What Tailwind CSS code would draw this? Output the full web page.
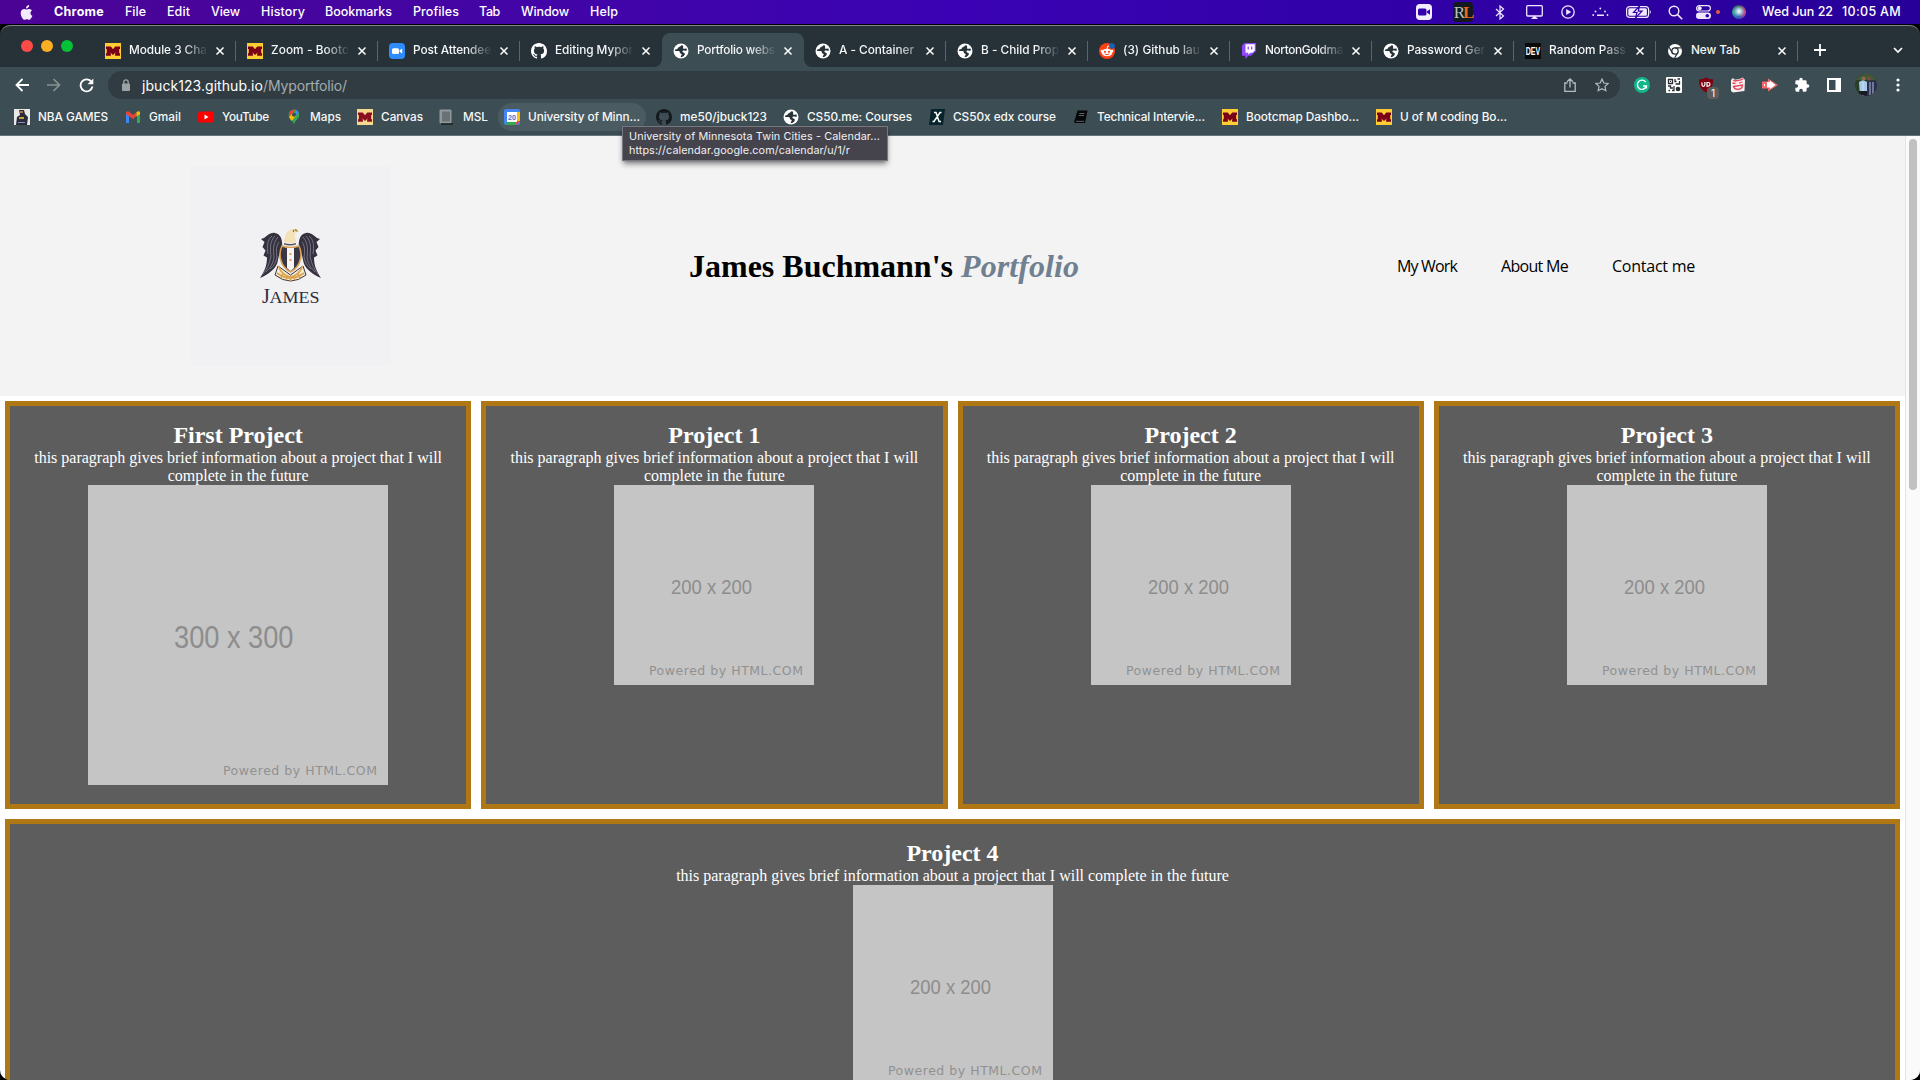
<!DOCTYPE html>
<html lang="en">
<head>
<meta charset="utf-8">
<title>Portfolio website</title>
<script src="https://cdn.jsdelivr.net/npm/@tailwindcss/browser@4"></script>
</head>
<body class="w-[1920px] h-[1080px] overflow-hidden bg-black font-['Inter',sans-serif]">
<svg class="hidden">
  <symbol id="m" viewBox="0 0 16 16"><rect width="16" height="16" fill="#fc3"/><path d="M1 3.500h4.800L8 6.300 10.200 3.500H15V6h-.8v4.200h.8v2.600h-4.900v-2.600h.5v-.8L8 12 5.400 9.400v.8h.5v2.600H1v-2.600h.8V6H1z" fill="#7a0019"/></symbol>
  <symbol id="m2" viewBox="0 0 16 16"><rect width="16" height="16" fill="#f5d98e"/><path d="M1 3.500h4.800L8 6.300 10.200 3.500H15V6h-.8v4.200h.8v2.600h-4.900v-2.600h.5v-.8L8 12 5.400 9.400v.8h.5v2.600H1v-2.600h.8V6H1z" fill="#8a1020"/></symbol>
  <symbol id="zoom" viewBox="0 0 16 16"><rect width="16" height="16" rx="4" fill="#2d8cff"/><rect x="3" y="5.200" width="7" height="5.800" rx="1.500" fill="#fff"/><path d="M10.600 7.300l2.600-1.900v5.200l-2.600-1.900z" fill="#fff"/></symbol>
  <symbol id="gh" viewBox="0 0 16 16"><path fill="currentColor" d="M8 0C3.580 0 0 3.580 0 8c0 3.540 2.290 6.530 5.470 7.590.4.070.55-.17.55-.38 0-.19-.01-.82-.01-1.490-2.010.37-2.530-.49-2.690-.94-.09-.23-.48-.94-.82-1.130-.28-.15-.68-.52-.01-.53.63-.01 1.080.58 1.230.82.72 1.210 1.870.87 2.330.66.07-.52.28-.87.51-1.070-1.780-.2-3.640-.89-3.640-3.950 0-.87.31-1.590.82-2.150-.08-.2-.36-1.020.08-2.120 0 0 .67-.21 2.200.82.64-.18 1.320-.27 2-.27s1.360.09 2 .27c1.530-1.040 2.200-.82 2.200-.82.44 1.100.16 1.920.08 2.120.51.56.82 1.270.82 2.150 0 3.070-1.870 3.750-3.650 3.950.29.25.54.73.54 1.480 0 1.070-.01 1.930-.01 2.200 0 .21.15.46.55.38A8.010 8.010 0 0016 8c0-4.420-3.580-8-8-8z"/></symbol>
  <symbol id="globe" viewBox="0 0 16 16"><circle cx="8" cy="8" r="7.500" fill="#fff"/><path d="M9.500 2.200C7 2.400 7.600 4 6 4.200c-1.600.2-.8 1.800-2.400 2-.8.100-1.400.2-1.800 1C3 8.600 5 7.600 6.200 8.200c1.200.6.2 1.800 1.400 2.200 1 .3 1.600 1 .6 2.200-.4.500-.6 1-.4 1.600 3-.2 4.200-2 4-3.600-.1-1.200-1.600-.8-2.200-1.600-.6-1 .4-1.600 1.400-1.400 1 .2 1.800.4 3-.4-.2-.8-.4-1.400-.8-2-1.200.8-2.400.8-3 .2-.6-.8.800-1.200-.7-3.200z" fill="#263238"/></symbol>
  <symbol id="x" viewBox="0 0 10 10"><path d="M1.500 1.500l7 7M8.500 1.500l-7 7" stroke="#fff" stroke-width="1.500" fill="none"/></symbol>
</svg>

<!-- macOS menu bar -->
<header class="flex h-6 items-center bg-linear-to-r from-[#4b0395] via-[#3a02b4] to-[#270099] text-[12.500px] font-medium text-white whitespace-nowrap">
  <svg class="ml-[19px] mr-5 size-[15px] shrink-0 text-[#f3eaff]" viewBox="0 0 16 18"><path fill="currentColor" d="M11.200 0c.1 1.200-.4 2.300-1.100 3.100-.7.800-1.700 1.300-2.700 1.200C7.300 3.200 7.800 2.100 8.500 1.300 9.200.6 10.300 0 11.200 0zM14.700 6.200c-1.200.8-1.900 1.900-1.900 3.300 0 1.600.9 2.900 2.300 3.500-.5 1.300-1.700 3.400-2.700 4.300-.9.700-1.700.5-2.600.1-1-.4-1.800-.4-2.800 0-1.200.5-1.900.6-2.900-.4C2 14.900.3 10.700 1.300 7.700 1.900 5.800 3.400 4.700 5 4.700c1.200 0 2.200.8 3 .8s2-.9 3.500-.8c1.200.1 2.400.6 3.200 1.500z"/></svg>
  <span class="w-[71px] font-bold"><span data-w="50">Chrome</span></span>
  <span class="w-[42px]"><span data-w="21">File</span></span>
  <span class="w-11"><span data-w="23">Edit</span></span>
  <span class="w-[50px]"><span data-w="29">View</span></span>
  <span class="w-16"><span data-w="44">History</span></span>
  <span class="w-[88px]"><span data-w="67">Bookmarks</span></span>
  <span class="w-[66px]"><span data-w="46">Profiles</span></span>
  <span class="w-[42px]"><span data-w="21">Tab</span></span>
  <span class="w-[69px]"><span data-w="48">Window</span></span>
  <span><span data-w="28">Help</span></span>
  <div class="ml-auto flex items-center pr-[19px]">
    <svg class="mr-[21px] size-4" viewBox="0 0 16 16"><rect width="16" height="16" rx="4" fill="#f3eeff"/><rect x="2" y="4.500" width="8.500" height="7" rx="1.500" fill="#3400ae"/><path d="M11 7.200l3-2v5.600l-3-2z" fill="#3400ae"/></svg>
    <div class="mr-[22px] flex h-5 w-5 items-center justify-center rounded bg-[#12191f] font-['Liberation_Serif',serif] text-[17px] leading-none tracking-[-2px] text-[#b9c4c4]">R<span class="font-bold text-[#f0641e]">L</span></div>
    <svg class="mr-[21px] h-[15px] w-[10px]" viewBox="0 0 10 15"><path d="M1 4l7.500 7L5 14V1l3.500 3L1 11" fill="none" stroke="#efe8ff" stroke-width="1.200"/></svg>
    <svg class="mr-[18px] h-[15px] w-[17px]" viewBox="0 0 17 15"><rect x=".7" y=".7" width="15.600" height="10.300" rx="1" fill="none" stroke="#efe8ff" stroke-width="1.300"/><path d="M5 14l3.500-3.500L12 14z" fill="#efe8ff"/></svg>
    <svg class="mr-[17px] size-[14px]" viewBox="0 0 14 14"><circle cx="7" cy="7" r="6.200" fill="none" stroke="#efe8ff" stroke-width="1.300"/><path d="M5.200 4l5 3-5 3z" fill="#efe8ff"/></svg>
    <svg class="mr-[17px] h-[10px] w-[17px]" viewBox="0 0 17 10" fill="#efe8ff"><circle cx="1.200" cy="8" r=".9"/><circle cx="3.500" cy="4.500" r=".9"/><circle cx="8.300" cy="1.500" r=".9"/><circle cx="13" cy="4.500" r=".9"/><circle cx="15.500" cy="8" r=".9"/><path d="M5 7.500h7V9H5z"/></svg>
    <svg class="mr-[16px] h-3 w-[26px]" viewBox="0 0 26 12"><rect x=".6" y=".6" width="22" height="10.800" rx="3" fill="none" stroke="#efe8ff" stroke-width="1.200"/><rect x="2.300" y="2.300" width="18.600" height="7.400" rx="1.500" fill="#efe8ff"/><path d="M23.800 4q2 2 0 4z" fill="#efe8ff"/><path d="M13.500 0L7.500 6.500h3.500L9.500 12l6.500-6.800h-3.700z" fill="#efe8ff" stroke="#3200a8" stroke-width="1.200"/></svg>
    <svg class="mr-[13px] size-[15px]" viewBox="0 0 15 15"><circle cx="6" cy="6" r="4.800" fill="none" stroke="#efe8ff" stroke-width="1.400"/><path d="M9.600 9.600l4.600 4.600" stroke="#efe8ff" stroke-width="1.600"/></svg>
    <svg class="mr-[5px] h-[14px] w-[15px]" viewBox="0 0 15 14"><rect x=".6" y=".6" width="13.800" height="5.400" rx="2.700" fill="none" stroke="#efe8ff" stroke-width="1.200"/><circle cx="3.700" cy="3.300" r="2" fill="#efe8ff"/><rect y="7.500" width="15" height="6.500" rx="3.200" fill="#efe8ff"/><circle cx="11.300" cy="10.800" r="1.800" fill="#3200a8"/></svg>
    <div class="mr-3 size-1 rounded-full bg-[#e0603c]"></div>
    <div class="mr-4 size-[14px] rounded-full bg-[radial-gradient(circle_at_50%_45%,#fff_0,#9fc8d8_25%,transparent_55%),conic-gradient(#37505c,#d04a84,#3355c0,#2ea890,#37505c)]"></div>
    <span class="w-20"><span data-w="71">Wed Jun 22</span></span>
    <span data-w="59">10:05 AM</span>
  </div>
</header>

<!-- browser window -->
<main class="mt-px h-[1055px] overflow-hidden rounded-[10px] border-t border-[#7d8588] bg-[#263238]">
  <div class="flex h-[41px] items-stretch text-[11.800px] font-medium text-[#f4f6f7] whitespace-nowrap">
    <div class="flex w-[94px] gap-2 pl-[21px] pt-[14px]">
      <i class="size-3 rounded-full bg-[#ff4b47]"></i><i class="size-3 rounded-full bg-[#fdaf24]"></i><i class="size-3 rounded-full bg-[#05c138]"></i>
    </div>
    <div class="flex w-[142px] items-center pl-[11px] pt-2"><svg class="mr-2 size-4"><use href="#m"/></svg><div class="w-[79px] overflow-hidden [mask-image:linear-gradient(to_right,#000_68%,transparent)]"><span data-w="78">Module 3 Cha</span></div><svg class="ml-[7px] size-[10px]"><use href="#x"/></svg><i class="ml-auto h-5 w-px bg-[#5b6468]"></i></div>
    <div class="flex w-[142px] items-center pl-[11px] pt-2"><svg class="mr-2 size-4"><use href="#m"/></svg><div class="w-[79px] overflow-hidden [mask-image:linear-gradient(to_right,#000_68%,transparent)]"><span data-w="78">Zoom - Bootc</span></div><svg class="ml-[7px] size-[10px]"><use href="#x"/></svg><i class="ml-auto h-5 w-px bg-[#5b6468]"></i></div>
    <div class="flex w-[142px] items-center pl-[11px] pt-2"><svg class="mr-2 size-4"><use href="#zoom"/></svg><div class="w-[79px] overflow-hidden [mask-image:linear-gradient(to_right,#000_68%,transparent)]"><span data-w="78">Post Attendee</span></div><svg class="ml-[7px] size-[10px]"><use href="#x"/></svg><i class="ml-auto h-5 w-px bg-[#5b6468]"></i></div>
    <div class="flex w-[142px] items-center pl-[11px] pt-2"><svg class="mr-2 size-4 text-white"><use href="#gh"/></svg><div class="w-[79px] overflow-hidden [mask-image:linear-gradient(to_right,#000_68%,transparent)]"><span data-w="78">Editing Mypor</span></div><svg class="ml-[7px] size-[10px]"><use href="#x"/></svg></div>
    <div class="flex w-[142px] items-end"><div class="relative flex h-[34px] w-full items-center rounded-t-lg bg-[#3c4d54] pl-[11px] pt-px">
      <svg class="absolute -left-2 bottom-0 size-2" viewBox="0 0 8 8"><path d="M8 0v8H0a8 8 0 008-8z" fill="#3c4d54"/></svg>
      <svg class="absolute -right-2 bottom-0 size-2" viewBox="0 0 8 8"><path d="M0 0v8h8a8 8 0 01-8-8z" fill="#3c4d54"/></svg>
      <svg class="mr-2 size-4"><use href="#globe"/></svg><div class="w-[79px] overflow-hidden [mask-image:linear-gradient(to_right,#000_68%,transparent)]"><span data-w="78">Portfolio webs</span></div><svg class="ml-[7px] size-[10px]"><use href="#x"/></svg></div></div>
    <div class="flex w-[142px] items-center pl-[11px] pt-2"><svg class="mr-2 size-4"><use href="#globe"/></svg><div class="w-[79px] overflow-hidden [mask-image:linear-gradient(to_right,#000_72%,transparent_115%)]"><span data-w="75">A - Container</span></div><svg class="ml-[7px] size-[10px]"><use href="#x"/></svg><i class="ml-auto h-5 w-px bg-[#5b6468]"></i></div>
    <div class="flex w-[142px] items-center pl-[11px] pt-2"><svg class="mr-2 size-4"><use href="#globe"/></svg><div class="w-[79px] overflow-hidden [mask-image:linear-gradient(to_right,#000_68%,transparent)]"><span data-w="78">B - Child Prop</span></div><svg class="ml-[7px] size-[10px]"><use href="#x"/></svg><i class="ml-auto h-5 w-px bg-[#5b6468]"></i></div>
    <div class="flex w-[142px] items-center pl-[11px] pt-2"><svg class="mr-2 size-4" viewBox="0 0 16 16"><circle cx="8" cy="8" r="8" fill="#ff4012"/><ellipse cx="8" cy="9.500" rx="5.300" ry="3.800" fill="#fff"/><circle cx="2.900" cy="8" r="1.300" fill="#fff"/><circle cx="13.100" cy="8" r="1.300" fill="#fff"/><path d="M8 6l.8-3 2 .4" stroke="#fff" fill="none"/><circle cx="6" cy="8.800" r="1.100" fill="#ff4012"/><circle cx="10" cy="8.800" r="1.100" fill="#ff4012"/><path d="M5.800 11q2.200 1.600 4.400 0" stroke="#ff4012" fill="none"/><circle cx="13" cy="3" r="2.800" fill="#1463b5"/></svg><div class="w-[79px] overflow-hidden [mask-image:linear-gradient(to_right,#000_68%,transparent)]"><span data-w="77">(3) Github lau</span></div><svg class="ml-[7px] size-[10px]"><use href="#x"/></svg><i class="ml-auto h-5 w-px bg-[#5b6468]"></i></div>
    <div class="flex w-[142px] items-center pl-[11px] pt-2"><svg class="mr-2 size-4" viewBox="0 0 16 16"><path d="M3.500 0L1 2.800v10h3.300V16l3.200-3.200H10l5-4.800V0z" fill="#9146ff"/><path d="M4.500 1.200h9.300v6.400l-2.200 2.200H9.300l-2 2v-2H4.500z" fill="#fff"/><path d="M7.200 3.500v3M10.700 3.500v3" stroke="#9146ff" stroke-width="1.300"/></svg><div class="w-[79px] overflow-hidden [mask-image:linear-gradient(to_right,#000_68%,transparent)]"><span data-w="78">NortonGoldma</span></div><svg class="ml-[7px] size-[10px]"><use href="#x"/></svg><i class="ml-auto h-5 w-px bg-[#5b6468]"></i></div>
    <div class="flex w-[142px] items-center pl-[11px] pt-2"><svg class="mr-2 size-4"><use href="#globe"/></svg><div class="w-[79px] overflow-hidden [mask-image:linear-gradient(to_right,#000_68%,transparent)]"><span data-w="78">Password Ger</span></div><svg class="ml-[7px] size-[10px]"><use href="#x"/></svg><i class="ml-auto h-5 w-px bg-[#5b6468]"></i></div>
    <div class="flex w-[142px] items-center pl-[11px] pt-2"><svg class="mr-2 size-4" viewBox="0 0 16 16"><rect width="16" height="16" fill="#0a0a0a"/><text x=".8" y="12" textLength="14.400" lengthAdjust="spacingAndGlyphs" fill="#fff" font-family="Liberation Sans" font-weight="700" font-size="10.500">DEV</text></svg><div class="w-[79px] overflow-hidden [mask-image:linear-gradient(to_right,#000_68%,transparent)]"><span data-w="77">Random Pass</span></div><svg class="ml-[7px] size-[10px]"><use href="#x"/></svg><i class="ml-auto h-5 w-px bg-[#5b6468]"></i></div>
    <div class="flex w-[142px] items-center pl-[11px] pt-2"><svg class="mr-2 size-4" viewBox="0 0 16 16"><circle cx="8" cy="8" r="7" fill="#fff"/><circle cx="8" cy="8" r="3.200" fill="#fff" stroke="#263238" stroke-width="1.300"/><path d="M8 4.800h6.500M5.200 9.600L2 4M10.800 9.600L7.600 15" stroke="#263238" stroke-width="1.200"/></svg><div class="w-[79px]"><span data-w="49">New Tab</span></div><svg class="ml-[7px] size-[10px]"><use href="#x"/></svg><i class="ml-auto h-5 w-px bg-[#5b6468]"></i></div>
    <svg class="ml-[16px] mt-[18px] size-3" viewBox="0 0 12 12"><path d="M6 0v12M0 6h12" stroke="#fff" stroke-width="1.800"/></svg>
    <svg class="ml-[67px] mt-[21px] h-[7px] w-[10px]" viewBox="0 0 10 7"><path d="M1 1l4 4 4-4" fill="none" stroke="#fff" stroke-width="1.700"/></svg>
  </div>

  <!-- toolbar -->
  <div class="flex h-9 items-center bg-[#3c4d54]">
    <svg class="ml-[15px] size-[14px]" viewBox="0 0 14 14"><path d="M14 7H1.500M7.500 1L1.500 7l6 6" fill="none" stroke="#fff" stroke-width="1.800"/></svg>
    <svg class="ml-[18px] size-[14px]" viewBox="0 0 14 14"><path d="M0 7h12.500M6.500 1l6 6-6 6" fill="none" stroke="#87928f" stroke-width="1.700"/></svg>
    <svg class="ml-[18px] size-[15px]" viewBox="0 0 15 15"><path d="M12.600 4A6 6 0 1013.500 8.500" fill="none" stroke="#fff" stroke-width="1.800"/><path d="M14.300.5v5.800H8.500z" fill="#fff"/></svg>
    <div class="ml-[14px] flex h-7 w-[1512px] items-center rounded-full bg-[#303c42] pl-[14px] text-[14px] whitespace-nowrap">
      <svg class="mr-[12px] h-3 w-2" viewBox="0 0 8 12"><rect y="4.500" width="8" height="7.500" rx="1" fill="#9aa3a6"/><path d="M1.800 5V3a2.200 2.200 0 014.400 0v2" fill="none" stroke="#9aa3a6" stroke-width="1.300"/></svg>
      <span data-w="121" class="text-white">jbuck123.github.io</span><span data-w="84" class="text-[#a4acb0]">/Myportfolio/</span>
      <svg class="ml-auto h-[14px] w-3" viewBox="0 0 12 14"><path d="M3.500 5H.8v8.300h10.400V5H8.500M6 9.500V1M3 3.800L6 1l3 2.800" fill="none" stroke="#b5bcbf" stroke-width="1.300"/></svg>
      <svg class="ml-[19px] mr-[11px] size-[14px]" viewBox="0 0 14 14"><path d="M7 1l1.800 4 4.300.5L10 8.400l.8 4.300L7 10.600l-3.800 2.100L4 8.400.9 5.500 5.200 5z" fill="none" stroke="#b5bcbf" stroke-width="1.200"/></svg>
    </div>
    <svg class="ml-[14px] size-4" viewBox="0 0 16 16"><circle cx="8" cy="8" r="8" fill="#11b78a"/><path d="M11.800 5.200A4.600 4.600 0 1012.400 9H9M12.400 8.500v3" fill="none" stroke="#fff" stroke-width="1.400"/></svg>
    <svg class="ml-4 size-4" viewBox="0 0 16 16"><rect width="16" height="16" rx="1" fill="#fff"/><g fill="none" stroke="#2a2f32" stroke-width="1.300"><path d="M2.500 2.500h4v4h-4zM9 2v2.500h1.500M11.500 2H14M13.500 4v3H9.500M2 9h2.500v2H7M2.500 13.500H4M6 13.500h2V9"/></g><path d="M4 4h1v1H4z" fill="#2a2f32"/><circle cx="12" cy="12" r="2.300" fill="#2a2f32"/></svg>
    <div class="relative ml-4 size-4"><svg class="size-4" viewBox="0 0 16 16"><path d="M8 .5c2 1.300 4.500 1.800 7 1.800 0 6-1 10-7 13.200C2 12.300 1 8.300 1 2.300c2.500 0 5-.5 7-1.800z" fill="#800010"/><path d="M4 5.500v2.300q0 1.500 1.400 1.500T6.900 7.800V5M9 9.300V5.500h1.200q1.800 0 1.800 1.800t-1.800 1.900z" fill="none" stroke="#fff" stroke-width="1.200"/></svg><span class="absolute left-[9px] top-[10px] flex h-[12px] w-3 items-center justify-center rounded-sm bg-[#5d5d5d] text-[10px] leading-none text-white">1</span></div>
    <svg class="ml-4 size-4" viewBox="0 0 16 16"><path d="M1 3L3 1l2 1.800 5-1L13 .5 15 3l-.5 11L3 15.500 1 14z" fill="#f9eef0"/><path d="M3 3l2 1 6-1 2.500-1.500M2.500 6l3 .5M9 6l3.500-1M3.500 9.500l9-1.500q0 4-4.300 4.300Q4.500 12.500 3.500 9.500z" fill="none" stroke="#e4465a" stroke-width="1.300"/></svg>
    <svg class="ml-4 size-4" viewBox="0 0 16 16"><path d="M0 4.500h6V1.500L16 8 6 14.500v-3H0z" fill="#f6676c"/><path d="M5 5h3V3.500L13.500 8 8 12v-1.500H5z" fill="#fff"/><path d="M2 7h1v2H2z" fill="#fff"/></svg>
    <svg class="ml-4 size-4" viewBox="0 0 24 24"><path fill="#fff" d="M20.500 11H19V7a2 2 0 00-2-2h-4V3.500a2.500 2.500 0 00-5 0V5H4a2 2 0 00-2 2v3.800h1.500a2.700 2.700 0 010 5.400H2V20a2 2 0 002 2h3.800v-1.500a2.700 2.700 0 015.400 0V22H17a2 2 0 002-2v-4h1.500a2.500 2.500 0 000-5z"/></svg>
    <svg class="ml-[17px] size-[14px]" viewBox="0 0 14 14"><path d="M0 0h14v14H0zM2 2v10h6.500V2z" fill="#fff" fill-rule="evenodd"/></svg>
    <svg class="ml-[14px] size-[22px] rounded-full" viewBox="0 0 22 22"><rect width="22" height="22" fill="#2b3f28"/><path d="M0 0h22v6H0z" fill="#3f5b34"/><path d="M4 8l4-2 4 2v14H5z" fill="#a9cbea"/><path d="M12 8l5-2 5 3v13h-9z" fill="#2c2f55"/><circle cx="8.500" cy="4.500" r="2" fill="#8c6650"/><circle cx="14" cy="4.500" r="2" fill="#6f4f40"/><path d="M8 8v14M15 8v13M18 8v13" stroke="#d8e4f5" stroke-width=".8"/><path d="M4 17h8v5H4z" fill="#191b22"/></svg>
    <svg class="ml-[19px] h-[14px] w-1" viewBox="0 0 4 14" fill="#fff"><circle cx="2" cy="2" r="1.600"/><circle cx="2" cy="7" r="1.600"/><circle cx="2" cy="12" r="1.600"/></svg>
  </div>

  <!-- bookmarks bar -->
  <div class="flex h-[33px] items-start border-b border-[#667378] bg-[#3c4d54] pl-[14px] text-[11.800px] font-medium text-[#f7f8f8] whitespace-nowrap [&_span]:pt-0.5">
    <div class="flex h-7 w-[111px] items-center gap-2"><svg class="size-4" viewBox="0 0 16 16"><rect width="16" height="16" fill="#e8e8e8"/><path d="M5 1h5l1 4 3 3-1 8H2l1-8 3-2z" fill="#2b2b38"/><path d="M6 2h3v2H6z" fill="#a4744f"/><path d="M5 8h5v2H5z" fill="#c9a03c"/><path d="M4 13h7v1H4z" fill="#7c8fbf"/></svg><span data-w="70">NBA GAMES</span></div>
    <div class="flex h-7 w-[73px] items-center gap-2"><svg class="size-4" viewBox="0 0 16 16"><path d="M1 3.500V14h3V6z" fill="#4285f4"/><path d="M12 6v8h3V3.500z" fill="#34a853"/><path d="M1 3q2-1.500 3.500 0L8 6l3.500-3v4L8 10 1 5z" fill="#ea4335"/><path d="M11.500 3Q14 1.500 15 3v2l-3.500 2.500z" fill="#fbbc04"/></svg><span data-w="32">Gmail</span></div>
    <div class="flex h-7 w-[88px] items-center gap-2"><svg class="size-4" viewBox="0 0 16 16"><rect y="2.500" width="16" height="11" rx="2.500" fill="#f00"/><path d="M6.500 5.500v5l4-2.500z" fill="#fff"/></svg><span data-w="47">YouTube</span></div>
    <div class="flex h-7 w-[71px] items-center gap-2"><svg class="size-4" viewBox="0 0 16 16"><path d="M8 .5a5.300 5.300 0 015.300 5.300C13.300 10 9 11 8 15.500 7 11 2.700 10 2.700 5.800A5.300 5.300 0 018 .5z" fill="#34a853"/><path d="M4 2.400L8 .5l1.500.2L3 8q-.8-3 1-5.600z" fill="#ea4335"/><path d="M9.500.7A5.300 5.300 0 0112.700 3.500L8 8.500z" fill="#4285f4"/><path d="M3 8l4-4 3 3-4.500 5z" fill="#fbbc04"/><circle cx="8" cy="5.800" r="2" fill="#3c4d54"/></svg><span data-w="31">Maps</span></div>
    <div class="flex h-7 w-[81px] items-center gap-2"><svg class="size-4"><use href="#m2"/></svg><span data-w="42">Canvas</span></div>
    <div class="flex h-7 w-[60px] items-center gap-[9px]"><svg class="size-4" viewBox="0 0 16 16"><rect x="1.500" y=".5" width="12" height="14" rx="1" fill="#90989b"/><path d="M4 2.500h8v10H4z" fill="#6b7275"/><path d="M3 15h12" stroke="#1a1f21" stroke-width="1.500"/></svg><span data-w="25">MSL</span></div>
    <div class="flex h-7 w-[148px] items-center gap-2 rounded-full bg-[#4b5b62] pl-[6px]"><svg class="size-4" viewBox="0 0 16 16"><rect width="16" height="16" rx="2" fill="#4285f4"/><path d="M12 3h4v9h-4z" fill="#fbbc04"/><path d="M3 12h9v4H2z" fill="#34a853"/><path d="M12 12h4l-4 4z" fill="#ea4335"/><rect x="3" y="3" width="10" height="10" fill="#fff"/><text x="4" y="11" font-size="7.500" font-weight="700" textLength="8" lengthAdjust="spacingAndGlyphs" font-family="Liberation Sans" fill="#3a74d8">20</text></svg><span data-w="112">University of Minn...</span></div>
    <div class="ml-[10px] flex h-7 w-[127px] items-center gap-2"><svg class="size-4 text-[#14191c]"><use href="#gh"/></svg><span data-w="87">me50/jbuck123</span></div>
    <div class="flex h-7 w-[146px] items-center gap-2"><svg class="size-4"><use href="#globe"/></svg><span data-w="105">CS50.me: Courses</span></div>
    <div class="flex h-7 w-36 items-center gap-2"><svg class="size-4" viewBox="0 0 16 16"><path d="M2 0h14l-2 16H0z" fill="#06242b"/><path d="M5 3.500h2l3 9h2M12.500 3.500h-1.500L5 12.500H3.500" fill="none" stroke="#fff" stroke-width="1.500"/></svg><span data-w="103">CS50x edx course</span></div>
    <div class="flex h-7 w-[149px] items-center gap-2"><svg class="size-4" viewBox="0 0 16 16"><path d="M4.500 1.500h10L12 14H2q-1.500-1-.5-2.500z" fill="#050708"/><path d="M6.500 4.500h5M6 6.500h5M3 12.300h8" stroke="#657177" stroke-width=".9"/></svg><span data-w="108">Technical Intervie...</span></div>
    <div class="flex h-7 w-[154px] items-center gap-2"><svg class="size-4"><use href="#m"/></svg><span data-w="113">Bootcmap Dashbo...</span></div>
    <div class="flex h-7 items-center gap-2"><svg class="size-4"><use href="#m"/></svg><span data-w="107">U of M coding Bo...</span></div>
  </div>

  <!-- page viewport -->
  <div class="flex h-[944px] bg-white">
    <div class="w-[1905px] overflow-hidden font-['Liberation_Serif',serif]">
      <section class="flex h-[260px] items-center bg-[#f3f3f3]">
        <svg class="ml-[191px] size-[200px] shrink-0 bg-[#f1f1f4]" viewBox="0 0 200 200">
          <g id="wing"><path d="M91 84C92 74 90 68 84 67c-4-1-7 2-11 5l-3 1 3.500 3-2 5 3 3.500-2 5 3.500 2C76 100 73 106 69 112c9-4 17-10 18-18 1-4 1-7 4-10z" fill="#35313f"/><path d="M81 70c-5 4-5 10-4 18M84 70c-5 5-5 12-4 20-1 7-4 13-8 18M87 71c-5 6-5 12-4 20-1 7-4 11-8 15M88 76c-3 4-3 9-2 15-1 5-3 9-7 12" fill="none" stroke="#9491a4" stroke-width=".7"/></g>
          <use href="#wing" transform="translate(199 0) scale(-1 1)"/>
          <path d="M87 100l-3 9q15.500 12 31 0l-3-9-12.500 9z" fill="#f5ead2" stroke="#3a3542" stroke-width="1"/>
          <path d="M87.500 100q3 9 12 11 9-2 12-11M86 107q13.500 10 27 0M92 108l-2 4M96 110l-1 4M99.500 110v5M103 110l1 4M107 108l2 4" fill="none" stroke="#dba550" stroke-width="1.700"/>
          <path d="M91 80q8.500 3 17 0 3 6 1.500 13-2 9-10 13-8-4-10-13Q88 86 91 80z" fill="#3b3645" stroke="#d9a355" stroke-width="1.600"/>
          <path d="M96 82h7v20l-3.500 3-3.500-3z" fill="#f6f4f5"/><path d="M98.500 87h2v2h-2zM98.500 93h2v2h-2z" fill="#dba550"/>
          <path d="M93 76c1-7 3-12 8-13 3-.5 5 0 5 3l-2 1c-1 2 1 5 1 9q-6 2-12 0z" fill="#f3e2b8"/><path d="M93 77q6 2 12 0v1.500q-6 2-12 0z" fill="#57525c"/><path d="M103.500 63q3-.5 3.500 3l-3-1z" fill="#b78a35"/><circle cx="102.500" cy="65" r=".7" fill="#333"/>
          <text x="71" y="137" font-family="Liberation Serif" font-size="20" fill="#2f2c3a">J</text><text x="78.500" y="137" font-family="Liberation Serif" font-size="17" fill="#2f2c3a" textLength="50" lengthAdjust="spacingAndGlyphs">AMES</text>
        </svg>
        <h1 class="ml-[298px] w-[708px] shrink-0 text-[32px] font-bold text-black whitespace-nowrap"><span data-w="264">James Buchmann's</span><span data-w="126" class="italic text-[#708090]">&nbsp;Portfolio</span></h1>
        <nav class="flex font-['Open_Sans',sans-serif] text-[16px] font-medium text-black whitespace-nowrap">
          <a class="w-[104px]"><span data-w="60">My Work</span></a><a class="w-[111px]"><span data-w="67">About Me</span></a><a><span data-w="83">Contact me</span></a>
        </nav>
      </section>
      <section class="grid grid-cols-4 text-center text-[16px] leading-[18px] text-white">
        <article class="m-[5px] flex h-[408px] flex-col items-center border-5 border-[#b07814] bg-[#5d5d5d] px-[15px] pt-[15px]">
          <h2 class="text-[24px] leading-7 font-bold">First Project</h2>
          <p>this paragraph gives brief information about a project that I will<br>complete in the future</p>
          <svg class="size-[300px] shrink-0 bg-[#c5c5c5]" viewBox="0 0 300 300"><text x="86" y="162.500" font-family="Liberation Sans" font-size="31" fill="#8d8d8d" textLength="119.500" lengthAdjust="spacingAndGlyphs">300 x 300</text><text x="135" y="290" font-family="DejaVu Sans" font-size="12.500" fill="#919191" textLength="154">Powered by HTML.COM</text></svg>
        </article>
        <article class="m-[5px] flex h-[408px] flex-col items-center border-5 border-[#b07814] bg-[#5d5d5d] px-[15px] pt-[15px]">
          <h2 class="text-[24px] leading-7 font-bold">Project 1</h2>
          <p>this paragraph gives brief information about a project that I will<br>complete in the future</p>
          <svg class="size-[200px] shrink-0 bg-[#c5c5c5]" viewBox="0 0 200 200"><text x="57" y="109" font-family="Liberation Sans" font-size="20.500" fill="#8d8d8d" textLength="81" lengthAdjust="spacingAndGlyphs">200 x 200</text><text x="35" y="190" font-family="DejaVu Sans" font-size="12.500" fill="#919191" textLength="154">Powered by HTML.COM</text></svg>
        </article>
        <article class="m-[5px] flex h-[408px] flex-col items-center border-5 border-[#b07814] bg-[#5d5d5d] px-[15px] pt-[15px]">
          <h2 class="text-[24px] leading-7 font-bold">Project 2</h2>
          <p>this paragraph gives brief information about a project that I will<br>complete in the future</p>
          <svg class="size-[200px] shrink-0 bg-[#c5c5c5]" viewBox="0 0 200 200"><text x="57" y="109" font-family="Liberation Sans" font-size="20.500" fill="#8d8d8d" textLength="81" lengthAdjust="spacingAndGlyphs">200 x 200</text><text x="35" y="190" font-family="DejaVu Sans" font-size="12.500" fill="#919191" textLength="154">Powered by HTML.COM</text></svg>
        </article>
        <article class="m-[5px] flex h-[408px] flex-col items-center border-5 border-[#b07814] bg-[#5d5d5d] px-[15px] pt-[15px]">
          <h2 class="text-[24px] leading-7 font-bold">Project 3</h2>
          <p>this paragraph gives brief information about a project that I will<br>complete in the future</p>
          <svg class="size-[200px] shrink-0 bg-[#c5c5c5]" viewBox="0 0 200 200"><text x="57" y="109" font-family="Liberation Sans" font-size="20.500" fill="#8d8d8d" textLength="81" lengthAdjust="spacingAndGlyphs">200 x 200</text><text x="35" y="190" font-family="DejaVu Sans" font-size="12.500" fill="#919191" textLength="154">Powered by HTML.COM</text></svg>
        </article>
        <article class="col-span-4 m-[5px] flex h-[408px] flex-col items-center border-5 border-[#b07814] bg-[#5d5d5d] px-[15px] pt-[15px]">
          <h2 class="text-[24px] leading-7 font-bold">Project 4</h2>
          <p>this paragraph gives brief information about a project that I will complete in the future</p>
          <svg class="size-[200px] shrink-0 bg-[#c5c5c5]" viewBox="0 0 200 200"><text x="57" y="109" font-family="Liberation Sans" font-size="20.500" fill="#8d8d8d" textLength="81" lengthAdjust="spacingAndGlyphs">200 x 200</text><text x="35" y="190" font-family="DejaVu Sans" font-size="12.500" fill="#919191" textLength="154">Powered by HTML.COM</text></svg>
        </article>
      </section>
    </div>
    <div class="w-[15px] border-l border-[#e4e4e4] bg-[#fafafa] pl-[3px] pt-[3px]"><div class="h-[351px] w-2 rounded-full bg-[#c1c1c1]"></div></div>
  </div>
</main>

<!-- bookmark tooltip -->
<div class="absolute left-[622px] top-[126px] h-[35px] w-[266px] border border-[#77777f] bg-[#45444c] pl-[6px] pt-[3px] text-[10.800px] leading-[14px] text-[#f0f0f2] shadow-md shadow-black/40 whitespace-nowrap">
  <div><span data-w="251">University of Minnesota Twin Cities - Calendar...</span></div>
  <div><span data-w="221">https://calendar.google.com/calendar/u/1/r</span></div>
</div>
<script>
// Tracks each label so that it fills the width its slot declares.
function fitLabels() {
  document.querySelectorAll('[data-w]').forEach(function (el) {
    el.style.letterSpacing = '0px';
    var natural = el.getBoundingClientRect().width;
    el.style.letterSpacing = ((el.dataset.w - natural) / el.textContent.length) + 'px';
  });
}
window.addEventListener('load', function () {
  fitLabels();
  document.fonts.ready.then(fitLabels);
  setTimeout(fitLabels, 50);
});
</script>
</body>
</html>
